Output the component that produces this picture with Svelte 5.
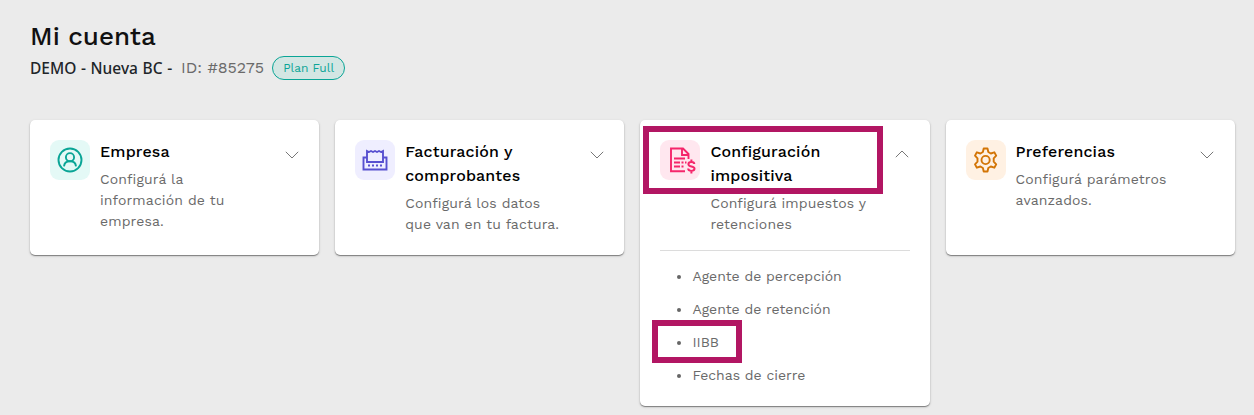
<script lang="ts">
	interface Card {
		id: string;
		title: string[];
		text: string[];
		color: string;
		tint: string;
		links?: string[];
	}

	const cards: Card[] = [
		{
			id: 'empresa',
			title: ['Empresa'],
			text: ['Configurá la', 'información de tu', 'empresa.'],
			color: '#0aa596',
			tint: '#e4f9f6'
		},
		{
			id: 'facturacion',
			title: ['Facturación y', 'comprobantes'],
			text: ['Configurá los datos', 'que van en tu factura.'],
			color: '#5850d0',
			tint: '#efeeff'
		},
		{
			id: 'impositiva',
			title: ['Configuración', 'impositiva'],
			text: ['Configurá impuestos y', 'retenciones'],
			color: '#f5266b',
			tint: '#ffe7ef',
			links: ['Agente de percepción', 'Agente de retención', 'IIBB', 'Fechas de cierre']
		},
		{
			id: 'preferencias',
			title: ['Preferencias'],
			text: ['Configurá parámetros', 'avanzados.'],
			color: '#d37506',
			tint: '#fff1e3'
		}
	];

	let open = $state<string | null>('impositiva');

	function toggle(id: string) {
		open = open === id ? null : id;
	}
</script>

<main class="page">
	<h1>Mi cuenta</h1>
	<div class="account">
		<span class="name">DEMO - Nueva BC -</span>
		<span class="id">ID: #85275</span>
		<span class="plan">Plan Full</span>
	</div>

	<div class="cards">
		{#each cards as c (c.id)}
			{@const expanded = open === c.id}
			<section class="card">
				<div class="head">
					<span class="icon" style:color={c.color} style:background={c.tint}>
						<svg width="26" height="26" viewBox="0 0 26 26" fill="none" stroke="currentColor">
							{#if c.id === 'empresa'}
								<g stroke-width="1.9">
									<circle cx="13" cy="13" r="11.5" />
									<circle cx="13" cy="10.2" r="4.1" />
									<path d="M7 19.4c.2-3.3 2.7-5.2 6-5.2s5.8 1.9 6 5.2" />
								</g>
							{:else if c.id === 'facturacion'}
								<path
									stroke-width="1.9"
									d="M5 10.5H1.500v12h23v-12H21M5 15V4l2 1 2-1 2 1 2-1 2 1 2-1 2 1 2-1v11z"
								/>
								<path stroke-width="2" stroke-dasharray="2 2" d="M6 18.500h14" />
							{:else if c.id === 'impositiva'}
								<path stroke-width="1.9" d="M18 24.300H4V1.500h12l5.500 5.500v5M15 2v6h6" />
								<path stroke-width="1.8" d="M7 11.500h11M7 15.500h6M14.500 15.500h2M18 15.500h1.500M7 19.500h6M14.500 19.500h2" />
								<path
									stroke-width="2"
									d="M27.300 17c0-1.300-1.200-2-2.900-2-1.800 0-3 .8-3 2.200 0 3.100 6.100 1.300 6.100 4.400 0 1.500-1.300 2.300-3.100 2.300-1.900 0-3.200-.8-3.200-2.300M24.400 12.500V15M24.400 24v2.500"
								/>
							{:else}
								<g stroke-width="1.9" stroke-linejoin="round" transform="translate(-.4 0)">
									<circle cx="13" cy="13" r="4.1" />
									<path
										d="M11.100 1.500h3.800l.8 3.500 2.500 1.500 3.500-1.200 1.900 3.300-2.500 2.700v3.400l2.500 2.700-1.900 3.300-3.500-1.200-2.500 1.500-.8 3.500h-3.800l-.8-3.500-2.500-1.500-3.500 1.200-1.900-3.300 2.500-2.700v-3.400L2.400 8.600l1.900-3.300 3.500 1.200L10.300 5z"
									/>
								</g>
							{/if}
						</svg>
					</span>
					<div class="body">
						<h2>
							{#each c.title as line}<span>{line}</span>{/each}
						</h2>
						<p>
							{#each c.text as line}<span>{line}</span>{/each}
						</p>
					</div>
					<button
						class="chevron"
						class:expanded
						aria-label={c.title.join(' ')}
						aria-expanded={expanded}
						onclick={() => toggle(c.id)}
					>
						<svg width="14" height="8" viewBox="0 0 14 8" fill="none" stroke="currentColor">
							<path d="M.8.8 7 7 13.2.8" />
						</svg>
					</button>
					{#if c.id === 'impositiva'}
						<span class="mark mark-head"></span>
					{/if}
				</div>
				{#if c.links && expanded}
					<ul>
						{#each c.links as link}
							<li>
								{link}
								{#if link === 'IIBB'}<span class="mark mark-link"></span>{/if}
							</li>
						{/each}
					</ul>
				{/if}
			</section>
		{/each}
	</div>
</main>

<style>
	:global(body) {
		background: #ebebeb;
	}
	.page {
		box-sizing: border-box;
		height: 415px;
		padding: 19px 19.2px 0 30px;
		overflow: hidden;
		color: #111;
		background: #ebebeb;
		font-family: 'Work Sans', Inter, 'Liberation Sans', sans-serif;
	}
	h1,
	h2,
	p,
	ul {
		margin: 0;
	}
	h1 {
		font-size: 26px;
		font-weight: 500;
		line-height: 34px;
	}
	.account {
		display: flex;
		align-items: center;
		height: 24px;
		margin: 3px 0 40px;
		white-space: nowrap;
	}
	.name {
		width: 143px;
		margin-right: 8px;
		color: #212529;
		font: 500 15.5px/24px 'Noto Sans', sans-serif;
		word-spacing: 0.6px;
	}
	.id {
		margin-right: 8px;
		padding-bottom: 2px;
		color: #6a6a6a;
		font-size: 16px;
	}
	.plan {
		box-sizing: border-box;
		width: 73px;
		height: 24px;
		border: 1px solid #0aa596;
		border-radius: 12px;
		color: #0aa596;
		background: #d3e6e3;
		font-size: 12px;
		line-height: 22px;
		text-align: center;
	}
	.cards {
		display: grid;
		grid-template-columns: repeat(4, 1fr);
		gap: 16px;
		align-items: start;
	}
	.card {
		box-sizing: border-box;
		min-height: 135px;
		padding: 20px;
		border-radius: 5px;
		background: #fff;
		box-shadow:
			0 1px 1px rgba(0, 0, 0, 0.4),
			0 1px 3px rgba(0, 0, 0, 0.16);
	}
	.head {
		position: relative;
		display: flex;
		align-items: flex-start;
	}
	.icon {
		display: flex;
		flex: 0 0 40px;
		align-items: center;
		justify-content: center;
		height: 40px;
		margin-right: 10px;
		border-radius: 9px;
	}
	.icon svg {
		overflow: visible;
	}
	.body {
		flex: 1;
		min-width: 0;
		white-space: nowrap;
	}
	.body span {
		display: block;
	}
	h2 {
		color: #000;
		font-size: 16px;
		font-weight: 500;
		line-height: 24px;
		letter-spacing: 0.15px;
	}
	p {
		margin-top: 5px;
		color: #6a6a6a;
		font-size: 14px;
		line-height: 21px;
		letter-spacing: 0.13px;
	}
	.chevron {
		display: flex;
		margin: 11px 0.4px 0 0;
		padding: 0;
		border: 0;
		color: #777;
		background: none;
		cursor: pointer;
	}
	.expanded {
		margin-top: 10px;
	}
	.expanded svg {
		transform: rotate(180deg);
	}
	ul {
		margin-top: 15px;
		padding: 9px 0 0 32px;
		border-top: 1px solid #dcdcdc;
		color: #6a6a6a;
		font-size: 14px;
		list-style: none;
	}
	li {
		position: relative;
		height: 33px;
		line-height: 33px;
	}
	li:last-child {
		margin-bottom: -6px;
	}
	li::before {
		position: absolute;
		top: 15px;
		left: -15.5px;
		width: 4px;
		height: 4px;
		border-radius: 50%;
		background: #666;
		content: '';
	}
	/* Callout frames over the highlighted options */
	.mark {
		position: absolute;
		box-sizing: border-box;
		border: 6px solid #b21663;
		pointer-events: none;
	}
	.mark-head {
		top: -14px;
		left: -17px;
		width: 240px;
		height: 68px;
	}
	.mark-link {
		top: -6px;
		left: -40.5px;
		width: 90px;
		height: 43px;
	}
</style>
